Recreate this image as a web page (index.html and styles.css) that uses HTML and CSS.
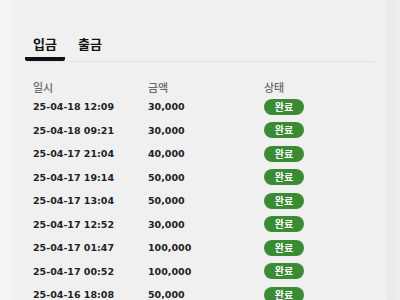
FILE: index.html
```html
<!DOCTYPE html>
<html lang="ko">
<head>
  <meta charset="UTF-8" />
  <meta name="viewport" content="width=device-width, initial-scale=1.0"/>
  <title>입출금 내역</title>
  <link rel="stylesheet" href="styles.css">
</head>
<body>
  <div class="panel">
    <div class="tabs">
      <div class="tab active">입금</div>
      <div class="tab">출금</div>
    </div>

    <div class="history">
      <div class="row head">
        <span>일시</span>
        <span>금액</span>
        <span>상태</span>
      </div>
      <div class="row"><span class="date">25-04-18 12:09</span><span class="amount">30,000</span><span class="badge">완료</span></div>
      <div class="row"><span class="date">25-04-18 09:21</span><span class="amount">30,000</span><span class="badge">완료</span></div>
      <div class="row"><span class="date">25-04-17 21:04</span><span class="amount">40,000</span><span class="badge">완료</span></div>
      <div class="row"><span class="date">25-04-17 19:14</span><span class="amount">50,000</span><span class="badge">완료</span></div>
      <div class="row"><span class="date">25-04-17 13:04</span><span class="amount">50,000</span><span class="badge">완료</span></div>
      <div class="row"><span class="date">25-04-17 12:52</span><span class="amount">30,000</span><span class="badge">완료</span></div>
      <div class="row"><span class="date">25-04-17 01:47</span><span class="amount">100,000</span><span class="badge">완료</span></div>
      <div class="row"><span class="date">25-04-17 00:52</span><span class="amount">100,000</span><span class="badge">완료</span></div>
      <div class="row"><span class="date">25-04-16 18:08</span><span class="amount">50,000</span><span class="badge">완료</span></div>
    </div>
  </div>
</body>
</html>
```

FILE: styles.css
```css
body {
  margin: 0;
  height: 300px;
  overflow: hidden;
  font-family: "Noto Sans CJK KR", "Noto Sans", sans-serif;
  background: linear-gradient(to right, #f4f4f4 0, #f4f4f4 12px, #f0f0f0 12px, #f0f0f0 387px, #e9e9e9 387px, #eeeeee 100%);
}

.panel {
  margin-left: 12px;
  width: 375px;
  height: 300px;
  background: #f0f0f0;
  padding: 34px 12px 0 13px;
  box-sizing: border-box;
}

.tabs {
  display: flex;
  gap: 5px;
  border-bottom: 1px solid #e2e2e8;
}

.tab {
  font-size: 13px;
  font-weight: 700;
  line-height: 20px;
  color: #111;
  padding: 0 8px 3px;
  border-bottom: 4px solid transparent;
}

.tab.active {
  border-bottom-color: #111;
  border-radius: 0 0 2px 2px;
}

.history {
  margin-top: 17px;
  padding-left: 8px;
}

.row {
  display: grid;
  grid-template-columns: 115px 116px auto;
  align-items: center;
  height: 23.5px;
}

.row.head {
  height: 16px;
  font-size: 11px;
  font-weight: 500;
  color: #6b6b6b;
}

.date, .amount {
  font-family: "DejaVu Sans", sans-serif;
  font-weight: 700;
  font-size: 9.5px;
  color: #222;
}

.badge {
  justify-self: start;
  width: 40px;
  height: 16px;
  line-height: 16px;
  border-radius: 8px;
  background: #3b8a34;
  color: #fff;
  font-size: 10px;
  font-weight: 700;
  text-align: center;
}
```
